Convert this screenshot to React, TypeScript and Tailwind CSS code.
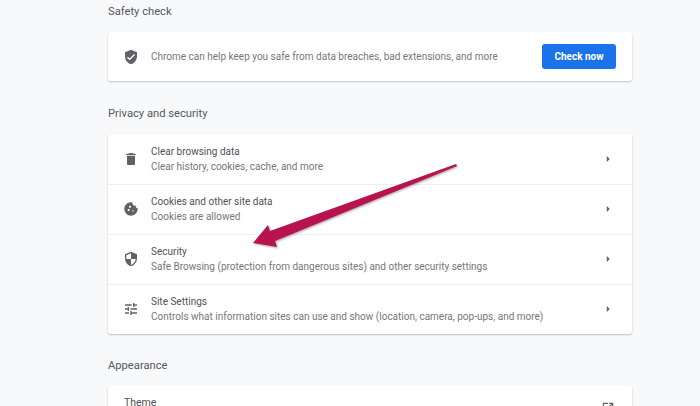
const rows = [
  {
    title: "Clear browsing data",
    sub: "Clear history, cookies, cache, and more",
    icon: "M6 19c0 1.1.9 2 2 2h8c1.1 0 2-.9 2-2V7H6v12zM19 4h-3.5l-1-1h-5l-1 1H5v2h14V4z",
  },
  {
    title: "Cookies and other site data",
    sub: "Cookies are allowed",
    icon: "M21.95 10.99c-1.79-.03-3.7-1.95-2.68-4.22-2.97 1-5.78-1.59-5.19-4.56C7.11.74 2 6.41 2 12c0 5.52 4.48 10 10 10 5.89 0 10.54-5.08 9.95-11.01zM8.5 15c-.83 0-1.5-.67-1.5-1.5S7.67 12 8.5 12s1.5.67 1.5 1.5S9.33 15 8.5 15zm2-5C9.67 10 9 9.33 9 8.5S9.67 7 10.5 7s1.5.67 1.5 1.5-.67 1.5-1.5 1.5zm4.5 6c-.55 0-1-.45-1-1s.45-1 1-1 1 .45 1 1-.45 1-1 1z",
  },
  {
    title: "Security",
    sub: "Safe Browsing (protection from dangerous sites) and other security settings",
    icon: "M12 1L3 5v6c0 5.55 3.84 10.74 9 12 5.16-1.26 9-6.45 9-12V5l-9-4zm0 10.99h7c-.53 4.12-3.28 7.79-7 8.94V12H5V6.3l7-3.11v8.8z",
  },
  {
    title: "Site Settings",
    sub: "Controls what information sites can use and show (location, camera, pop-ups, and more)",
    icon: "M3 17v2h6v-2H3zM3 5v2h10V5H3zm10 16v-2h8v-2h-8v-2h-2v6h2zM7 9v2H3v2h4v2h2V9H7zm14 4v-2H11v2h10zm-6-4h2V7h4V5h-4V3h-2v6z",
  },
];

function Icon({ d, className }: { d: string; className: string }) {
  return (
    <svg viewBox="0 0 24 24" fill="currentColor" className={className}>
      <path d={d} />
    </svg>
  );
}

function Row({ row, first }: { row: (typeof rows)[number]; first: boolean }) {
  return (
    <div className={`flex h-[50px] items-center pl-[15px] pr-[17px] ${first ? "" : "border-t border-[#eeeff1] pb-[1px]"}`}>
      <Icon d={row.icon} className="h-4 w-4 shrink-0 text-[#5f6368]" />
      <div className="ml-[12px] flex-1">
        <div className="text-[10px] leading-[15px] text-[#4f5256]">{row.title}</div>
        <div className="text-[10px] leading-[15px] text-[#74777b]">{row.sub}</div>
      </div>
      <Icon d="M10 17l5-5-5-5v10z" className="h-[14px] w-[14px] text-[#5f6368]" />
    </div>
  );
}

export default function App() {
  return (
    <div className="relative h-[406px] w-[700px] overflow-hidden bg-[#f8f9fa] pl-[108px] font-['Roboto',sans-serif]">
      <div className="w-[524px]">
        <h2 className="flex h-[24px] items-center text-[11.2px] text-[#55585c]">Safety check</h2>
        <div className="mt-[8px] flex h-[49px] items-center rounded-[3px] bg-white pl-[15px] pr-[16px] shadow-[0_1px_2px_rgba(60,64,67,0.3)]">
          <Icon
            d="M12 1L3 5v6c0 5.55 3.84 10.74 9 12 5.16-1.26 9-6.45 9-12V5l-9-4zm-2 16l-4-4 1.41-1.41L10 14.17l6.59-6.59L18 9l-8 8z"
            className="h-4 w-4 shrink-0 text-[#5f6368]"
          />
          <span className="ml-[12px] flex-1 text-[10px] text-[#74777b]">
            Chrome can help keep you safe from data breaches, bad extensions, and more
          </span>
          <button className="h-[25px] w-[74px] rounded-[3px] bg-[#1a73e8] text-[10px] font-bold text-white">
            Check now
          </button>
        </div>

        <h2 className="mt-[21px] flex h-[24px] items-center text-[11.2px] text-[#55585c]">Privacy and security</h2>
        <div className="mt-[8px] rounded-[3px] bg-white shadow-[0_1px_2px_rgba(60,64,67,0.3)]">
          {rows.map((row, i) => (
            <Row key={row.title} row={row} first={i === 0} />
          ))}
        </div>

        <h2 className="mt-[21px] flex h-[23px] items-center text-[11.2px] text-[#55585c]">Appearance</h2>
        <div className="mt-[8px] flex h-[49px] items-start justify-between rounded-[3px] bg-white pl-[16px] pr-[17px] pt-[9px] shadow-[0_1px_2px_rgba(60,64,67,0.3)]">
          <span className="text-[10.5px] leading-[15px] text-[#4f5256]">Theme</span>
          <Icon
            d="M19 19H5V5h7V3H5c-1.11 0-2 .9-2 2v14c0 1.1.89 2 2 2h14c1.1 0 2-.9 2-2v-7h-2v7zM14 3v2h3.59l-9.83 9.83 1.41 1.41L19 6.41V10h2V3h-7z"
            className="mt-[6px] h-[14px] w-[14px] text-[#5f6368]"
          />
        </div>
      </div>

      {/* annotation arrow over the page */}
      <svg className="absolute left-0 top-0 h-[406px] w-[700px]" viewBox="0 0 700 406">
        <polygon
          points="456,164 457,166 275,241 277,247 253,243 268,225 270,231"
          fill="#b9134f"
          className="drop-shadow-[1px_1px_1px_rgba(0,0,0,0.35)]"
        />
      </svg>
    </div>
  );
}
